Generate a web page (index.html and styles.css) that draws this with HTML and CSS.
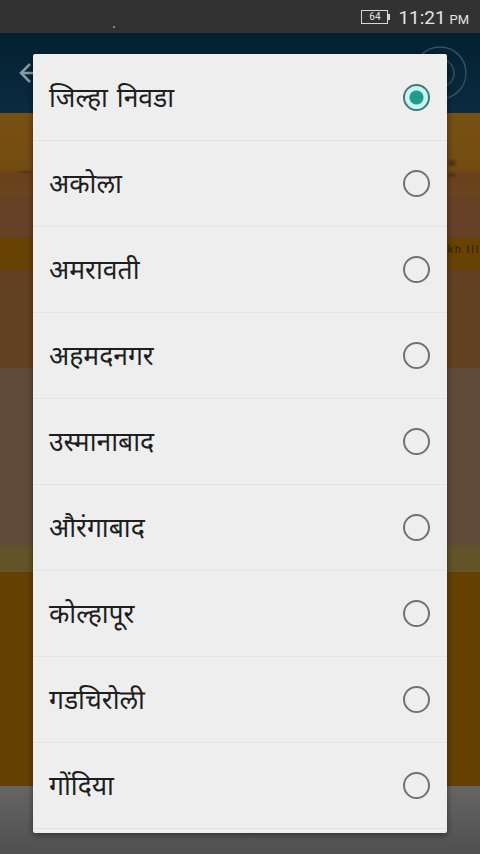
FILE: index.html
```html
<!DOCTYPE html>
<html lang="mr">
<head>
<meta charset="utf-8">
<title>जिल्हा निवडा</title>
<link rel="stylesheet" href="styles.css">
</head>
<body>
<div class="screen">
  <div class="status">
    <span class="battery">64</span>
    <span class="clock">11:21 <small>PM</small></span>
  </div>
  <div class="appbar">
    <svg class="back" width="24" height="24" viewBox="0 0 24 24"><path d="M21 12H4M12 3l-9 9 9 9" fill="none" stroke="#8a9aa5" stroke-width="2.5"/></svg>
    <svg class="logo" width="56" height="56" viewBox="0 0 56 56"><circle cx="28" cy="28" r="26" fill="none" stroke="#33505f" stroke-width="1.5"/><circle cx="28" cy="28" r="14" fill="none" stroke="#2c4858" stroke-width="2"/></svg>
  </div>
  <div class="band banner"></div>
  <div class="band pale"></div>
  <div class="band strip"><span class="cut">kh III</span></div>
  <div class="band brown"></div>
  <div class="band brown2"></div>
  <div class="band olive"></div>
  <div class="band deep"></div>
  <div class="band grey"></div>
  <div class="dialog">
    <div class="row"><span>जिल्हा निवडा</span><i class="radio on"></i></div>
    <div class="row"><span>अकोला</span><i class="radio"></i></div>
    <div class="row"><span>अमरावती</span><i class="radio"></i></div>
    <div class="row"><span>अहमदनगर</span><i class="radio"></i></div>
    <div class="row"><span>उस्मानाबाद</span><i class="radio"></i></div>
    <div class="row"><span>औरंगाबाद</span><i class="radio"></i></div>
    <div class="row"><span>कोल्हापूर</span><i class="radio"></i></div>
    <div class="row"><span>गडचिरोली</span><i class="radio"></i></div>
    <div class="row"><span>गोंदिया</span><i class="radio"></i></div>
  </div>
</div>
</body>
</html>
```
FILE: styles.css
```css
* { box-sizing: border-box; }
html, body { margin: 0; padding: 0; }
.screen { position: relative; width: 480px; height: 854px; overflow: hidden; background: #5a5a5a; font-family: "Noto Sans Devanagari", "Noto Sans", sans-serif; }
.status { position: relative; height: 33px; background: #323232; display: flex; justify-content: flex-end; align-items: center; gap: 9px; padding: 1px 11px 0 0; color: #e4e4e4; font-family: Roboto, sans-serif; }
.status::before { content: ""; position: absolute; left: 113px; top: 26px; width: 2px; height: 2px; background: #8a8a8a; }
.battery { position: relative; width: 27px; height: 14px; margin-right: 1px; border: 1px solid #d8d8d8; font-size: 10px; line-height: 12px; text-align: center; }
.battery::after { content: ""; position: absolute; right: -3px; top: 3px; width: 2px; height: 6px; background: #d8d8d8; }
.clock { font-size: 19px; word-spacing: -1px; }
.clock small { font-size: 13px; }
.appbar { height: 80px; background: linear-gradient(#03202e, #0a2b42); display: flex; justify-content: space-between; align-items: center; padding: 0 12px 0 18px; }
.band { height: 50px; }
.banner { height: 84px; background:
  radial-gradient(ellipse 9px 2px at 26px 59px, #4a3010, transparent),
  radial-gradient(ellipse 6px 5px at 452px 50px, #4a3010, transparent),
  radial-gradient(ellipse 6px 3px at 452px 62px, #4a3010, transparent),
  linear-gradient(#775012 0, #734c12 65%, #68401c 75%, #6d451d 100%); }
.pale { height: 41px; background: #664125; }
.strip { height: 32px; padding-bottom: 10px; background: #684203; display: flex; justify-content: flex-end; align-items: center; }
.cut { font: 11px/1 "Liberation Sans", sans-serif; letter-spacing: 1.4px; color: #2c1d08; }
.brown { height: 98px; background: #644023; }
.brown2 { height: 177px; background: #624a3a; }
.olive { height: 27px; background: #635328; }
.deep { height: 214px; background: #644103; }
.grey { height: 68px; background: linear-gradient(#656565, #505050); }
.dialog { position: absolute; left: 33px; top: 54px; width: 414px; padding: 0 0 4px; background: #eeeeee; border-radius: 2px; box-shadow: 0 2px 6px rgba(0,0,0,.45); }
.row { height: 86px; display: flex; justify-content: space-between; align-items: center; padding: 0 17px 0 16px; border-bottom: 1px solid #e4e4e4; font-size: 26.5px; word-spacing: 2px; color: #1e1e1e; }
.row:first-child { height: 87px; }
.row span { position: relative; top: 3px; }
.radio { width: 27px; height: 27px; border-radius: 50%; border: 2.5px solid #717171; }
.radio.on { border-color: #3f7a78; background: radial-gradient(circle, #1f9a8c 0 6.5px, #c8f5ef 7.5px); }
```
